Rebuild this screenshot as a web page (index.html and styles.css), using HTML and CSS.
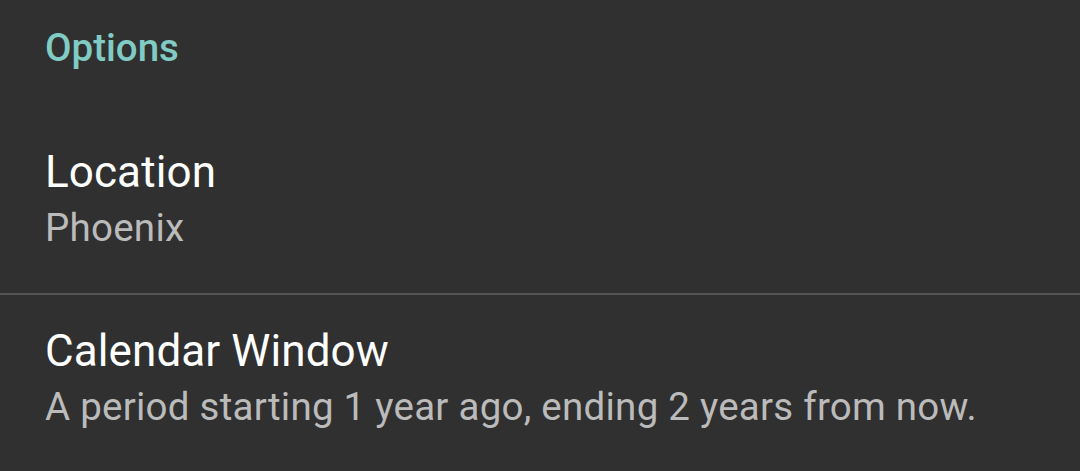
FILE: index.html
```html
<!DOCTYPE html>
<html lang="en">
<head>
  <meta charset="UTF-8">
  <meta name="viewport" content="width=device-width,initial-scale=1.0">
  <title>Options</title>
  <link rel="stylesheet" href="styles.css">
</head>
<body>
  <div class="prefs">
    <h2 class="category">Options</h2>

    <div class="pref">
      <div class="pref-title">Location</div>
      <div class="pref-summary">Phoenix</div>
    </div>

    <div class="divider"></div>

    <div class="pref pref-last">
      <div class="pref-title">Calendar Window</div>
      <div class="pref-summary">A period starting 1 year ago, ending 2 years from now.</div>
    </div>
  </div>
</body>
</html>
```

FILE: styles.css
```css
*{box-sizing:border-box}
html,body{margin:0;padding:0;height:100%}
body{background:#303030;font-family:Roboto,"Noto Sans",Arial,sans-serif;overflow:hidden}
.prefs{display:flex;flex-direction:column}
.category{margin:0;padding:22px 45px 0;font-size:38.5px;line-height:52px;font-weight:500;color:#80cbc4}
.pref{padding:69px 45px 38px;display:flex;flex-direction:column}
.pref-last{padding-top:27px}
.pref-title{font-size:44px;line-height:58px;color:#fff;letter-spacing:0.1px}
.pref-summary{font-size:38.5px;line-height:54px;color:#bbb;letter-spacing:0.25px}
.divider{height:2px;background:#545454}
```
